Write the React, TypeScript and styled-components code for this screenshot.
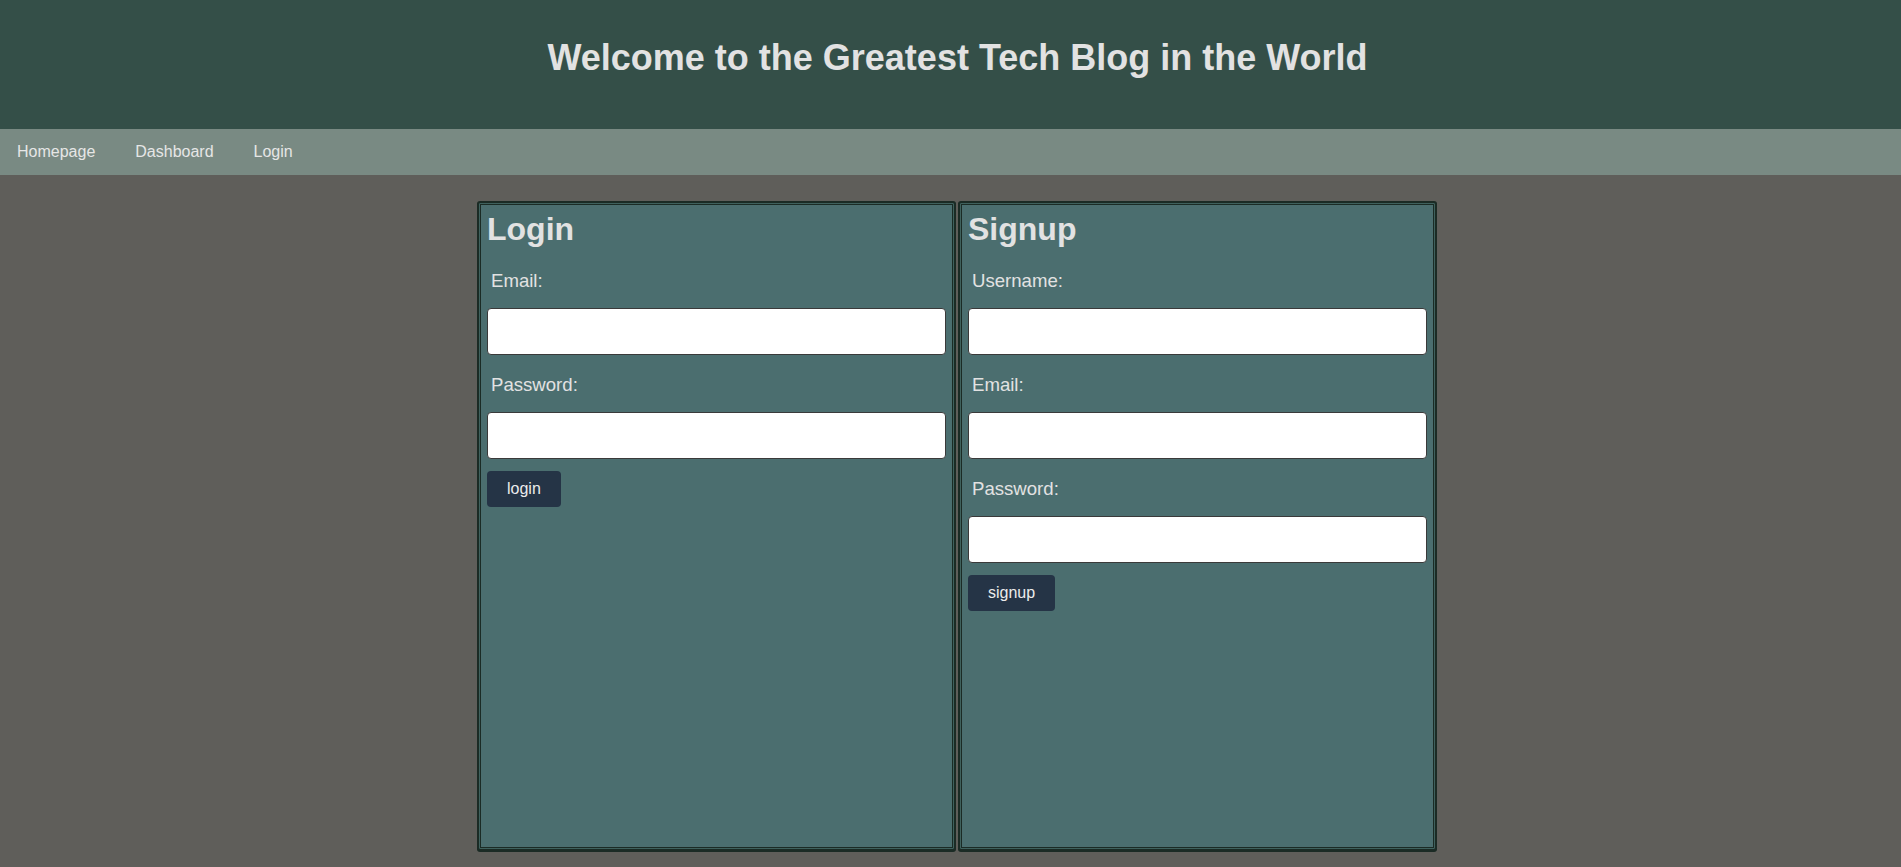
import React from "react";
import styled, { createGlobalStyle } from "styled-components";

const GlobalStyle = createGlobalStyle`
  * { box-sizing: border-box; }
  html, body { margin: 0; padding: 0; }
  body {
    background: #5f5e5a;
    font-family: "Liberation Sans", Arial, sans-serif;
    color: #e2e2e2;
    min-height: 100vh;
  }
`;

const Header = styled.header`
  height: 129px;
  background: #344f48;
  padding: 37px 0 0 14px;
  display: flex;
  justify-content: center;
  align-items: flex-start;
`;

const Title = styled.h1`
  margin: 0;
  font-size: 36px;
  font-weight: 700;
  color: #e2e2e2;
`;

const Nav = styled.nav`
  height: 46px;
  background: #798a83;
  display: flex;
  align-items: center;
  gap: 40px;
  padding-left: 17px;
`;

const NavLink = styled.a`
  color: #e6e6e6;
  font-size: 16px;
  text-decoration: none;
  cursor: pointer;
`;

const Main = styled.main`
  display: flex;
  justify-content: center;
  padding: 26px 0 0 13px;
`;

const Cards = styled.div`
  display: flex;
  gap: 2px;
`;

const Card = styled.section`
  width: 479px;
  height: 75vh;
  background: #4b6e6f;
  border: 2px solid #1b2b25;
  border-radius: 3px;
  box-shadow: inset 0 0 0 1px #3f615d, inset 0 0 0 2px #1b2b25, 0 1px 0 #1b2b25;
  padding: 8px;
  display: flex;
  flex-direction: column;
  align-items: flex-start;
`;

const CardTitle = styled.h2`
  margin: 0 0 3px;
  font-size: 32px;
  font-weight: 700;
  color: #e2e2e2;
`;

const Label = styled.label`
  display: block;
  margin: 19px 0 16px 4px;
  font-size: 18.6px;
  color: #e2e2e2;
`;

const Input = styled.input`
  display: block;
  width: 100%;
  height: 47px;
  background: #ffffff;
  border: 1px solid #3a3a3a;
  border-radius: 4px;
  font-size: 16px;
  padding: 0 8px;
  outline: none;
`;

const Button = styled.button`
  margin-top: 12px;
  height: 36px;
  padding: 0 20px;
  background: #253446;
  color: #ececec;
  border: none;
  border-radius: 4px;
  font-family: "Liberation Sans", Arial, sans-serif;
  font-size: 16px;
  cursor: pointer;
`;

type Field = { label: string; type: string };

const FormCard: React.FC<{ title: string; fields: Field[]; action: string }> = ({ title, fields, action }) => (
  <Card>
    <CardTitle>{title}</CardTitle>
    {fields.map((f) => (
      <React.Fragment key={f.label}>
        <Label>{f.label}</Label>
        <Input type={f.type} />
      </React.Fragment>
    ))}
    <Button type="button">{action}</Button>
  </Card>
);

export default function App() {
  return (
    <>
      <GlobalStyle />
      <Header>
        <Title>Welcome to the Greatest Tech Blog in the World</Title>
      </Header>
      <Nav>
        <NavLink>Homepage</NavLink>
        <NavLink>Dashboard</NavLink>
        <NavLink>Login</NavLink>
      </Nav>
      <Main>
        <Cards>
          <FormCard
            title="Login"
            action="login"
            fields={[
              { label: "Email:", type: "email" },
              { label: "Password:", type: "password" },
            ]}
          />
          <FormCard
            title="Signup"
            action="signup"
            fields={[
              { label: "Username:", type: "text" },
              { label: "Email:", type: "email" },
              { label: "Password:", type: "password" },
            ]}
          />
        </Cards>
      </Main>
    </>
  );
}
